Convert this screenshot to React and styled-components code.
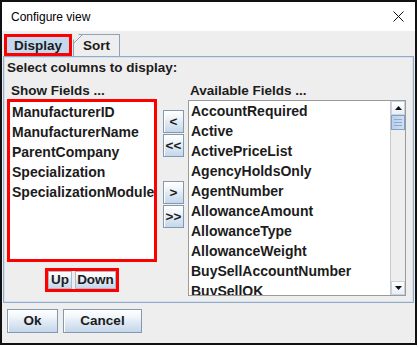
import React from 'react';
import styled, { createGlobalStyle } from 'styled-components';

const Global = createGlobalStyle`
  html, body { margin: 0; padding: 0; background: #ffffff; }
  body { font-family: "Liberation Sans", Arial, sans-serif; }
  * { box-sizing: border-box; }
`;

const Window = styled.div`
  width: 417px;
  height: 345px;
  border: 2px solid #111111;
  display: flex;
  flex-direction: column;
  background: #eeeeee;
`;

const TitleBar = styled.div`
  height: 29px;
  flex: none;
  background: #ffffff;
  display: flex;
  align-items: center;
  justify-content: space-between;
  padding: 0 11px 0 9px;
  font-size: 12px;
  color: #000000;
`;

const Body = styled.div`
  flex: 1;
  display: flex;
  flex-direction: column;
  padding: 3px 1px 0 1px;
  color: #1c1c1c;
  font-weight: bold;
`;

const TabRow = styled.div`
  display: flex;
  align-items: flex-end;
  height: 22px;
  padding-left: 1px;
`;

const Tab = styled.div`
  height: 22px;
  width: ${p => p.$w}px;
  display: flex;
  align-items: center;
  justify-content: center;
  font-size: 13.5px;
  ${p => p.$active ? `
    border: 3px solid #ff0000;
    background: #c5d9ee;
  ` : `
    margin-left: 1px;
    border: 1px solid #8ea2b8;
    border-bottom: none;
    background: linear-gradient(135deg, transparent 5px, #8ea2b8 5px, #8ea2b8 6px, #eeeeee 6px);
    clip-path: polygon(6px 0, 100% 0, 100% 100%, 0 100%, 0 6px);
  `}
`;

const Panel = styled.div`
  height: 247px;
  border: 1px solid #93abc6;
  box-shadow: inset 0 0 0 1px #d3e0ee;
  padding: 3px 7px 0 3px;
  display: flex;
  flex-direction: column;
`;

const Heading = styled.div`
  font-size: 13.5px;
  line-height: 16px;
  margin-bottom: 7px;
`;

const Columns = styled.div`
  display: flex;
  align-items: flex-start;
`;

const LeftCol = styled.div`
  width: 150px;
  display: flex;
  flex-direction: column;
  align-items: center;
`;

const FieldLabel = styled.div`
  align-self: stretch;
  font-size: 13.5px;
  line-height: 16px;
  padding-left: ${p => p.$pad}px;
  margin-bottom: ${p => p.$mb}px;
`;

const ShowList = styled.div`
  align-self: stretch;
  height: 163px;
  border: 3px solid #ff0000;
  background: #ffffff;
  padding: 0 0 0 2px;
`;

const Item = styled.div`
  height: 20px;
  line-height: 20px;
  font-size: 14px;
  white-space: nowrap;
  overflow: hidden;
`;

const UpDownBox = styled.div`
  margin-top: 6px;
  border: 3px solid #ff0000;
  display: flex;
  gap: 3px;
  height: 24px;
`;

const Btn = styled.button`
  font-family: "Liberation Sans", Arial, sans-serif;
  font-weight: bold;
  font-size: 13.5px;
  line-height: 16px;
  color: #1c1c1c;
  width: ${p => p.$w}px;
  height: ${p => p.$h}px;
  padding: 0;
  margin: 0;
  border: 1px solid #8499ae;
  border-radius: 0;
  background: linear-gradient(to bottom, #ffffff 0%, #f1f6fb 30%, #dfe9f4 55%, #c4d7eb 100%);
  box-shadow: inset 1px 1px 0 #ffffff;
  display: flex;
  align-items: center;
  justify-content: center;
`;

const FlatBtn = styled(Btn)`
  border-color: #a9b9c9;
  box-shadow: none;
`;

const MidCol = styled.div`
  width: 21px;
  margin: 0 4px 0 6px;
  padding-top: 27px;
  display: flex;
  flex-direction: column;
`;

const Pair = styled.div`
  display: flex;
  flex-direction: column;
  gap: 1px;
  margin-bottom: ${p => p.$mb || 0}px;
`;

const RightCol = styled.div`
  width: 219px;
  display: flex;
  flex-direction: column;
`;

const AvailList = styled.div`
  height: 196px;
  border: 1px solid #9a9a9a;
  background: #ffffff;
  display: flex;
  overflow: hidden;
`;

const AvailItems = styled.div`
  flex: 1;
  padding-left: 2px;
  overflow: hidden;
`;

const ScrollBar = styled.div`
  width: 15px;
  display: flex;
  flex-direction: column;
  background: #eeeeee;
  border-left: 1px solid #c9c9c9;
`;

const Arrow = styled.div`
  height: 14px;
  display: flex;
  align-items: center;
  justify-content: center;
  background: linear-gradient(to bottom, #ffffff, #e9eff6);
  border: 1px solid #c6d3e0;
`;

const Thumb = styled.div`
  height: 15px;
  background: linear-gradient(to right, #b9d0ea, #cfe0f2);
  border: 1px solid #7f9fcc;
  display: flex;
  flex-direction: column;
  justify-content: center;
  gap: 2px;
  padding: 0 2px;
`;

const Grip = styled.div`
  height: 1px;
  background: #8fa9cf;
`;

const Track = styled.div`
  flex: 1;
`;

const Footer = styled.div`
  display: flex;
  gap: 5px;
  padding: 6px 0 0 4px;
`;

const CloseIcon = () => (
  <svg width="11" height="11" viewBox="0 0 11 11">
    <path d="M0.5 0.5 L10.5 10.5 M10.5 0.5 L0.5 10.5" stroke="#111" strokeWidth="1" />
  </svg>
);

const Tri = ({ up }) => (
  <svg width="7" height="4" viewBox="0 0 7 4">
    <path d={up ? 'M0 4 L3.5 0 L7 4 Z' : 'M0 0 L7 0 L3.5 4 Z'} fill="#111" />
  </svg>
);

const showFields = ['ManufacturerID', 'ManufacturerName', 'ParentCompany', 'Specialization', 'SpecializationModule'];
const availFields = [
  'AccountRequired', 'Active', 'ActivePriceList', 'AgencyHoldsOnly', 'AgentNumber',
  'AllowanceAmount', 'AllowanceType', 'AllowanceWeight', 'BuySellAccountNumber', 'BuySellOK',
];

export default function App() {
  return (
    <>
      <Global />
      <Window>
        <TitleBar>
          <span>Configure view</span>
          <CloseIcon />
        </TitleBar>
        <Body>
          <TabRow>
            <Tab $active $w={68}>Display</Tab>
            <Tab $w={47}>Sort</Tab>
          </TabRow>
          <Panel>
            <Heading>Select columns to display:</Heading>
            <Columns>
              <LeftCol>
                <FieldLabel $pad={4} $mb={0}>Show Fields ...</FieldLabel>
                <ShowList>
                  {showFields.map(f => <Item key={f}>{f}</Item>)}
                </ShowList>
                <UpDownBox>
                  <FlatBtn $w={24} $h={18}>Up</FlatBtn>
                  <FlatBtn $w={41} $h={18}>Down</FlatBtn>
                </UpDownBox>
              </LeftCol>
              <MidCol>
                <Pair $mb={24}>
                  <Btn $w={21} $h={23}>&lt;</Btn>
                  <Btn $w={21} $h={23}>&lt;&lt;</Btn>
                </Pair>
                <Pair>
                  <Btn $w={21} $h={23}>&gt;</Btn>
                  <Btn $w={21} $h={23}>&gt;&gt;</Btn>
                </Pair>
              </MidCol>
              <RightCol>
                <FieldLabel $pad={2} $mb={1}>Available Fields ...</FieldLabel>
                <AvailList>
                  <AvailItems>
                    {availFields.map(f => <Item key={f}>{f}</Item>)}
                  </AvailItems>
                  <ScrollBar>
                    <Arrow><Tri up /></Arrow>
                    <Thumb><Grip /><Grip /><Grip /></Thumb>
                    <Track />
                    <Arrow><Tri /></Arrow>
                  </ScrollBar>
                </AvailList>
              </RightCol>
            </Columns>
          </Panel>
          <Footer>
            <Btn $w={51} $h={24}>Ok</Btn>
            <Btn $w={79} $h={24}>Cancel</Btn>
          </Footer>
        </Body>
      </Window>
    </>
  );
}
